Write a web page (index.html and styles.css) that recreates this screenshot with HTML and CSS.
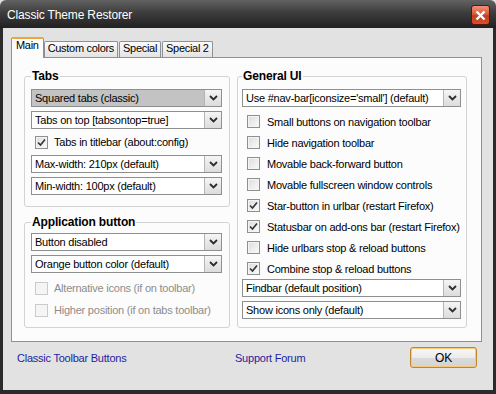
FILE: index.html
```html
<!DOCTYPE html>
<html>
<head>
<meta charset="utf-8">
<link rel="stylesheet" href="styles.css">
</head>
<body>
<div class="window">
  <div class="titlebar">
    <span class="title">Classic Theme Restorer</span>
    <span class="close"><svg width="11" height="11" viewBox="0 0 11 11"><path d="M1.5 1.5 L9.5 9.5 M9.5 1.5 L1.5 9.5" stroke="#fff" stroke-width="2.4" fill="none"/></svg></span>
  </div>
  <div class="client">
    <div class="tabs">
      <div class="tab selected">Main</div>
      <div class="tab first-after">Custom colors</div>
      <div class="tab">Special</div>
      <div class="tab">Special 2</div>
    </div>
    <div class="panel">
      <div class="col col-left">
        <fieldset class="group g-tabs">
          <legend>Tabs</legend>
          <div class="select focused"><span class="val">Squared tabs (classic)</span><span class="arrow"><svg width="9" height="6" viewBox="0 0 9 6"><polyline points="1,1 4.5,4.5 8,1" stroke="#2d2d2d" stroke-width="1.8" fill="none"/></svg></span></div>
          <div class="select"><span class="val">Tabs on top [tabsontop=true]</span><span class="arrow"><svg width="9" height="6" viewBox="0 0 9 6"><polyline points="1,1 4.5,4.5 8,1" stroke="#2d2d2d" stroke-width="1.8" fill="none"/></svg></span></div>
          <div class="check"><span class="box"><svg width="11" height="11" viewBox="0 0 11 11"><polyline points="2,5.5 4.5,8 9,2.5" stroke="#333" stroke-width="1.6" fill="none"/></svg></span><span>Tabs in titlebar (about:config)</span></div>
          <div class="select"><span class="val">Max-width: 210px (default)</span><span class="arrow"><svg width="9" height="6" viewBox="0 0 9 6"><polyline points="1,1 4.5,4.5 8,1" stroke="#2d2d2d" stroke-width="1.8" fill="none"/></svg></span></div>
          <div class="select"><span class="val">Min-width: 100px (default)</span><span class="arrow"><svg width="9" height="6" viewBox="0 0 9 6"><polyline points="1,1 4.5,4.5 8,1" stroke="#2d2d2d" stroke-width="1.8" fill="none"/></svg></span></div>
        </fieldset>
        <fieldset class="group g-app">
          <legend>Application button</legend>
          <div class="select"><span class="val">Button disabled</span><span class="arrow"><svg width="9" height="6" viewBox="0 0 9 6"><polyline points="1,1 4.5,4.5 8,1" stroke="#2d2d2d" stroke-width="1.8" fill="none"/></svg></span></div>
          <div class="select"><span class="val">Orange button color (default)</span><span class="arrow"><svg width="9" height="6" viewBox="0 0 9 6"><polyline points="1,1 4.5,4.5 8,1" stroke="#2d2d2d" stroke-width="1.8" fill="none"/></svg></span></div>
          <div class="check disabled"><span class="box"></span><span>Alternative icons (if on toolbar)</span></div>
          <div class="check disabled"><span class="box"></span><span>Higher position (if on tabs toolbar)</span></div>
        </fieldset>
      </div>
      <div class="col col-right">
        <fieldset class="group g-general">
          <legend>General UI</legend>
          <div class="select"><span class="val">Use #nav-bar[iconsize='small'] (default)</span><span class="arrow"><svg width="9" height="6" viewBox="0 0 9 6"><polyline points="1,1 4.5,4.5 8,1" stroke="#2d2d2d" stroke-width="1.8" fill="none"/></svg></span></div>
          <div class="check"><span class="box"></span><span>Small buttons on navigation toolbar</span></div>
          <div class="check"><span class="box"></span><span>Hide navigation toolbar</span></div>
          <div class="check"><span class="box"></span><span>Movable back-forward button</span></div>
          <div class="check"><span class="box"></span><span>Movable fullscreen window controls</span></div>
          <div class="check"><span class="box"><svg width="11" height="11" viewBox="0 0 11 11"><polyline points="2,5.5 4.5,8 9,2.5" stroke="#333" stroke-width="1.6" fill="none"/></svg></span><span>Star-button in urlbar (restart Firefox)</span></div>
          <div class="check"><span class="box"><svg width="11" height="11" viewBox="0 0 11 11"><polyline points="2,5.5 4.5,8 9,2.5" stroke="#333" stroke-width="1.6" fill="none"/></svg></span><span>Statusbar on add-ons bar (restart Firefox)</span></div>
          <div class="check"><span class="box"></span><span>Hide urlbars stop &amp; reload buttons</span></div>
          <div class="check"><span class="box"><svg width="11" height="11" viewBox="0 0 11 11"><polyline points="2,5.5 4.5,8 9,2.5" stroke="#333" stroke-width="1.6" fill="none"/></svg></span><span>Combine stop &amp; reload buttons</span></div>
          <div class="select"><span class="val">Findbar (default position)</span><span class="arrow"><svg width="9" height="6" viewBox="0 0 9 6"><polyline points="1,1 4.5,4.5 8,1" stroke="#2d2d2d" stroke-width="1.8" fill="none"/></svg></span></div>
          <div class="select"><span class="val">Show icons only (default)</span><span class="arrow"><svg width="9" height="6" viewBox="0 0 9 6"><polyline points="1,1 4.5,4.5 8,1" stroke="#2d2d2d" stroke-width="1.8" fill="none"/></svg></span></div>
        </fieldset>
      </div>
    </div>
    <div class="footer">
      <span class="link link-first">Classic Toolbar Buttons</span>
      <span class="link">Support Forum</span>
      <span class="ok">OK</span>
    </div>
  </div>
</div>
</body>
</html>
```

FILE: styles.css
```css
* { box-sizing: border-box; }
html, body { margin: 0; padding: 0; }
body {
  background: #dedede;
  font-family: "Liberation Sans", Arial, sans-serif;
  font-size: 11px;
  letter-spacing: -0.23px;
  color: #000;
}
.window {
  width: 496px;
  height: 394px;
  display: flex;
  flex-direction: column;
  border-radius: 6px 6px 0 0;
  background: linear-gradient(to bottom, #626262 0, #3c3c3c 13px, #212121 28px, #2b2b2b 29px, #2b2b2b 100%);
}
.titlebar {
  height: 28px;
  flex: none;
  display: flex;
  align-items: center;
  justify-content: space-between;
  padding: 2px 6px 0 7px;
}
.title {
  color: #fff;
  font-size: 12px;
  letter-spacing: -0.15px;
}
.close {
  width: 19px;
  height: 20px;
  border: 1px solid #5a170e;
  border-radius: 3px;
  background: linear-gradient(to bottom, #f0907a 0, #de5a38 45%, #c63b1a 55%, #d9502c 100%);
  display: flex;
  align-items: center;
  justify-content: center;
}
.client {
  flex: 1;
  margin: 0 3px 4px;
  background: #e2e2e2;
  padding: 9px 11px 0 8px;
  display: flex;
  flex-direction: column;
}
.tabs {
  display: flex;
  align-items: flex-end;
  height: 20px;
  position: relative;
  z-index: 1;
}
.tab {
  height: 16px;
  padding: 0 3px;
  border: 1px solid #8d9096;
  border-bottom: none;
  border-radius: 2px 2px 0 0;
  background: linear-gradient(to bottom, #fbfbfb, #e3e3e3);
  line-height: 13px;
  margin-left: 1px;
  white-space: nowrap;
  letter-spacing: -0.3px;
}
.tab.selected {
  height: 21px;
  margin-bottom: -1px;
  margin-left: 0;
  padding: 0 4px;
  border-top: 2px solid #f0a43c;
  background: #fcfcfc;
}
.tab.first-after { margin-left: 0; }
.panel {
  border: 1px solid #8d9096;
  background: #fcfcfc;
  padding: 11px 14px 13px 12px;
  display: flex;
  gap: 7px;
}
.col-left {
  width: 206px;
  display: flex;
  flex-direction: column;
  gap: 8px;
}
.col-right { width: 230px; }
.group {
  margin: 0;
  min-width: 0;
  border: 1px solid #d3d3d3;
  border-radius: 3px;
}
.group legend {
  font-weight: bold;
  font-size: 12px;
  letter-spacing: -0.15px;
  line-height: 14px;
  padding: 0 1px;
}
.g-tabs { padding: 6px 7px 11px 6px; }
.g-app { padding: 4px 7px 6px 6px; }
.g-general { padding: 6px 5px 8px 4px; }
.select {
  display: flex;
  height: 18px;
  border: 1px solid #8e8f8f;
  background: #fff;
  margin-bottom: 4px;
}
.select .val {
  flex: 1;
  padding-left: 3px;
  line-height: 16px;
  white-space: nowrap;
  overflow: hidden;
}
.select.focused .val { background: #c3c3c3; }
.select .arrow {
  width: 17px;
  flex: none;
  border-left: 1px solid #b5b5b5;
  background: linear-gradient(to bottom, #f5f5f5, #dcdcdc);
  display: flex;
  align-items: center;
  justify-content: center;
}
.group > :last-child { margin-bottom: 0; }
.check {
  display: flex;
  align-items: center;
  gap: 6px;
  padding-left: 4px;
  height: 18px;
  margin-bottom: 4px;
  white-space: nowrap;
}
.box {
  width: 13px;
  height: 13px;
  flex: none;
  border: 1px solid #8e8f8f;
  background: linear-gradient(135deg, #dcdcdc, #fbfbfb);
  box-shadow: inset 0 0 0 1px #f4f4f4;
  display: flex;
  align-items: center;
  justify-content: center;
}
.g-app .check { height: 22px; margin: 0; }
.g-general .check { height: 21px; margin: 0; padding-left: 5px; gap: 7px; }
.check.disabled { color: #8d8d8d; }
.check.disabled .box {
  border-color: #cbcbcb;
  background: #f5f5f5;
  box-shadow: none;
}
.footer {
  display: flex;
  align-items: center;
  margin-top: 5px;
  padding-left: 6px;
}
.link { color: #1e1ea0; }
.link-first { width: 218px; }
.ok {
  margin-left: auto;
  margin-right: 5px;
  width: 67px;
  height: 21px;
  border: 1px solid #c4852a;
  border-radius: 3px;
  box-shadow: inset 0 0 0 1px #f7c878;
  background: linear-gradient(to bottom, #f8f8f8 0, #ececec 50%, #dadada 51%, #d4d4d4 100%);
  display: flex;
  align-items: center;
  justify-content: center;
  font-size: 12px;
}
```
